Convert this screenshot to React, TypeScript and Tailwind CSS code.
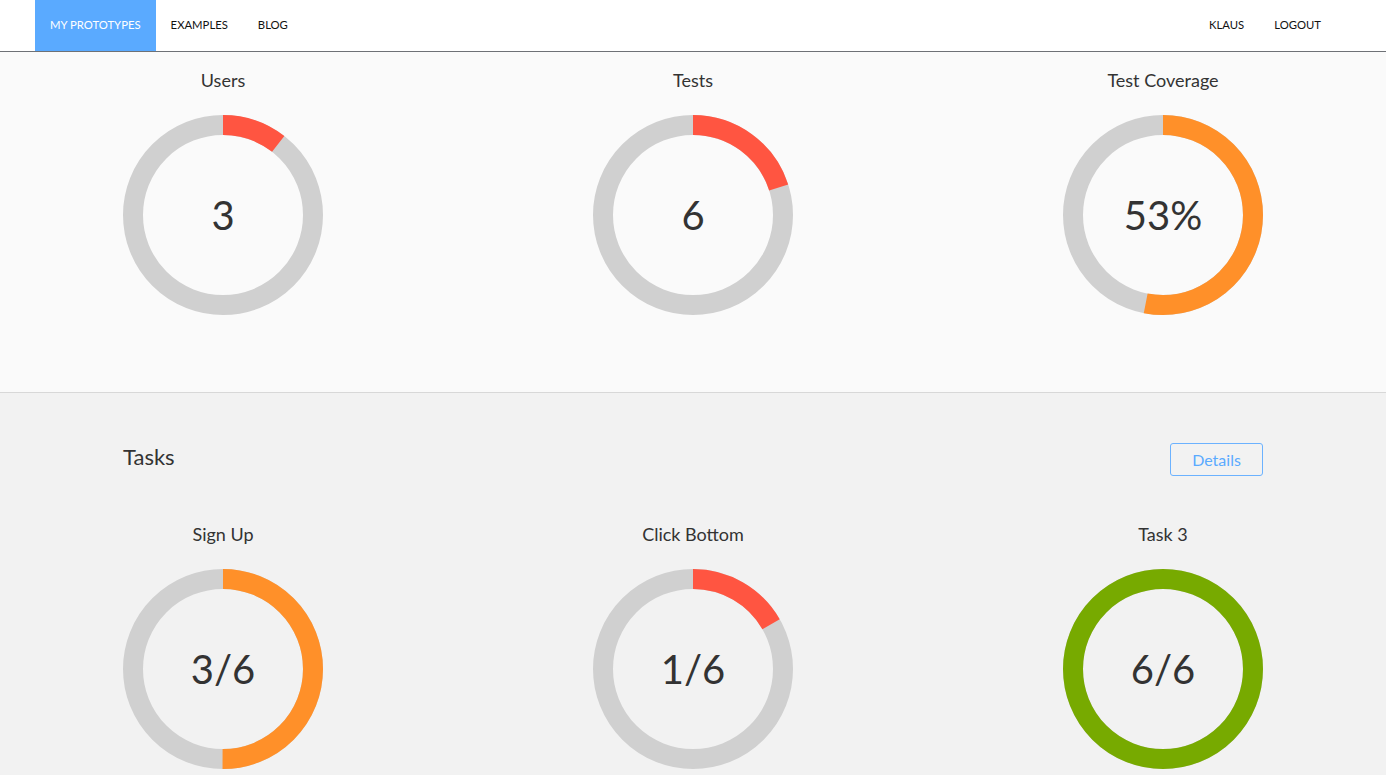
import React from "react";

const font = { fontFamily: "'Source Sans Pro', Lato, 'Open Sans', sans-serif" };

function Donut({ title, value, pct, color }: { title: string; value: string; pct: number; color: string }) {
  const r = 90;
  const c = 2 * Math.PI * r;
  return (
    <div className="flex flex-col items-center w-[200px]">
      <h3 className="text-[18px] leading-[24px] text-[#333]">{title}</h3>
      <div className="relative mt-[23px] w-[200px] h-[200px]">
        <svg width="200" height="200" viewBox="0 0 200 200" className="block">
          <circle cx="100" cy="100" r={r} fill="none" stroke="#d0d0d0" strokeWidth="20" />
          <circle
            cx="100"
            cy="100"
            r={r}
            fill="none"
            stroke={color}
            strokeWidth="20"
            strokeDasharray={`${c * pct} ${c}`}
            transform="rotate(-90 100 100)"
          />
        </svg>
        <div className="absolute inset-0 flex items-center justify-center text-[40px] text-[#333]">{value}</div>
      </div>
    </div>
  );
}

export default function App() {
  return (
    <div style={font} className="min-h-screen bg-[#f2f2f2] text-[#333]">
      {/* Navbar */}
      <nav className="h-[52px] bg-white border-b border-[#6e7176] flex justify-between pl-[35px] pr-[50px]">
        <div className="flex text-[11.3px] uppercase">
          <a className="bg-[#5aaaff] text-white px-[15px] flex items-center">My Prototypes</a>
          <a className="px-[15px] flex items-center text-[#111]">Examples</a>
          <a className="px-[15px] flex items-center text-[#111]">Blog</a>
        </div>
        <div className="flex text-[11.3px] uppercase">
          <a className="px-[15px] flex items-center text-[#111]">Klaus</a>
          <a className="px-[15px] flex items-center text-[#111]">Logout</a>
        </div>
      </nav>

      {/* Stats */}
      <section className="bg-[#fafafa] border-b border-[#d8d8d8] h-[341px] pt-[16px]">
        <div className="w-[1140px] ml-[123px] flex justify-between">
          <Donut title="Users" value="3" pct={0.105} color="#ff5541" />
          <Donut title="Tests" value="6" pct={0.2} color="#ff5541" />
          <Donut title="Test Coverage" value="53%" pct={0.53} color="#ff9029" />
        </div>
      </section>

      {/* Tasks */}
      <section className="pt-[45px] pb-[40px]">
        <div className="w-[1140px] ml-[123px]">
          <div className="flex justify-between items-center">
            <h2 className="text-[22px] leading-[30px]">Tasks</h2>
            <button className="w-[93px] h-[33px] border border-[#6cb2ff] rounded-[3px] text-[#5aaaff] text-[16px] mt-[5px]">
              Details
            </button>
          </div>
          <div className="flex justify-between mt-[46px]">
            <Donut title="Sign Up" value="3/6" pct={0.5} color="#ff9029" />
            <Donut title="Click Bottom" value="1/6" pct={0.1667} color="#ff5541" />
            <Donut title="Task 3" value="6/6" pct={1} color="#77aa00" />
          </div>
        </div>
      </section>
    </div>
  );
}
